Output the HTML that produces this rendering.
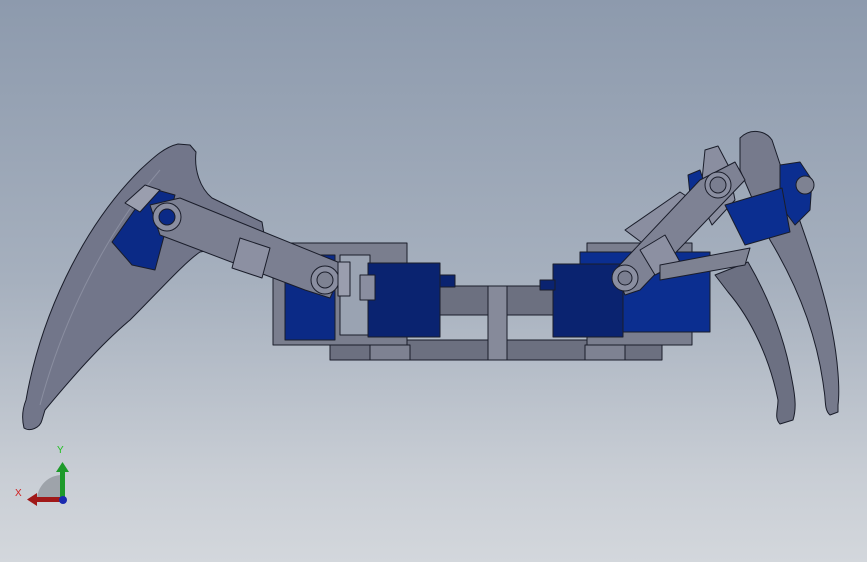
<!DOCTYPE html>
<html><head><style>
html,body{margin:0;padding:0}
body{width:867px;height:562px;overflow:hidden;background:linear-gradient(#8d9aad 0%,#a6b0be 50%,#c9ced5 85%,#d3d7dc 100%);}
svg{position:absolute;left:0;top:0}
text{font-family:"Liberation Sans",sans-serif}
</style></head><body>
<svg width="867" height="562" viewBox="0 0 867 562">
<g stroke="#1a1d2a" stroke-width="1" stroke-linejoin="round">
<!-- left claw -->
<path d="M24,428 C22,420 22,410 26,400 C40,320 80,230 140,170 C155,156 165,147 178,144 L190,145 L196,152 C194,170 200,188 212,198 L262,222 L265,240 L200,252 C185,262 160,290 130,320 C100,345 70,380 45,410 L42,420 C40,428 30,432 24,428 Z" fill="#72768a"/>
<path d="M40,405 C60,330 100,240 160,170" fill="none" stroke="#8a8ea0"/>
<!-- left servo on claw -->
<path d="M112,242 L150,188 L175,195 L155,270 L132,265 Z" fill="#0b2a86"/>
<path d="M125,203 L145,185 L160,190 L140,212 Z" fill="#9a9eae"/>
<!-- center bottom plates -->
<rect x="330" y="340" width="332" height="20" fill="#6c7080"/>
<rect x="370" y="345" width="40" height="15" fill="#7e8292"/>
<rect x="585" y="345" width="40" height="15" fill="#7e8292"/>
<rect x="343" y="286" width="300" height="29" fill="#6c7080"/>
<rect x="488" y="286" width="19" height="74" fill="#868a9a"/>
<!-- left bracket frame -->
<rect x="273" y="243" width="134" height="102" fill="#7a7e8e"/>
<rect x="285" y="255" width="50" height="85" fill="#0b2a86"/>
<rect x="340" y="255" width="30" height="80" fill="#9aa3b2"/>
<rect x="368" y="263" width="72" height="74" fill="#0a2370"/>
<rect x="360" y="275" width="15" height="25" fill="#8a8ea0"/>
<!-- right bracket frame -->
<rect x="587" y="243" width="105" height="102" fill="#7a7e8e"/>
<rect x="580" y="252" width="130" height="80" fill="#0b2e90"/>
<rect x="553" y="264" width="70" height="73" fill="#0a2370"/>
<rect x="440" y="275" width="15" height="12" fill="#0a2370"/>
<rect x="540" y="280" width="15" height="10" fill="#0a2370"/>
<!-- left arm -->
<path d="M150,205 L180,198 L345,265 L330,298 L305,290 L160,235 Z" fill="#7b7f91"/>
<path d="M240,238 L270,248 L262,278 L232,268 Z" fill="#8c90a2"/>
<circle cx="167" cy="217" r="14" fill="#8a8ea0"/><circle cx="167" cy="217" r="8" fill="#0b2a86"/>
<circle cx="325" cy="280" r="14" fill="#8a8ea0"/><circle cx="325" cy="280" r="8" fill="#7e8292"/>
<rect x="338" y="262" width="12" height="34" fill="#9a9eae"/>
<!-- right outer claw -->
<path d="M740,138 C750,128 765,130 772,140 L778,158 C795,210 820,270 832,330 C838,360 840,390 838,405 L838,412 L830,415 C824,410 826,400 824,390 C818,340 800,290 770,240 L740,170 Z" fill="#767a8c"/>
<!-- right inner claw -->
<path d="M715,275 L748,262 C770,300 785,340 792,380 C796,400 796,410 793,420 L780,424 C774,418 778,410 778,400 C770,360 752,320 728,292 Z" fill="#6c7082"/>
<path d="M705,150 L718,146 L728,165 L735,200 L712,225 L700,200 Z" fill="#8a8ea0"/>
<!-- right back servo -->
<path d="M780,165 L800,162 L812,180 L810,210 L795,225 L780,205 Z" fill="#0b2e90"/>
<circle cx="805" cy="185" r="9" fill="#7e8292"/>
<path d="M725,205 L782,188 L790,232 L745,245 Z" fill="#0b2e90"/>
<path d="M625,230 L680,192 L700,205 L675,225 L645,245 Z" fill="#8a8ea0"/>
<path d="M688,175 L700,170 L705,185 L690,195 Z" fill="#0b2e90"/>
<!-- right arm -->
<path d="M700,180 L735,162 L745,180 L640,290 L625,295 L615,270 Z" fill="#7e8294"/>
<path d="M640,250 L665,235 L680,262 L655,275 Z" fill="#8c90a2"/>
<path d="M660,265 L750,248 L745,265 L660,280 Z" fill="#7e8292"/>
<circle cx="718" cy="185" r="13" fill="#8a8ea0"/><circle cx="718" cy="185" r="8" fill="#7a7e90"/>
<circle cx="625" cy="278" r="13" fill="#8a8ea0"/><circle cx="625" cy="278" r="7" fill="#7a7e90"/>
</g>
<!-- triad -->
<path d="M62,500 L37,500 A25,25 0 0 1 62,475 Z" fill="#9ea3aa"/>
<rect x="60" y="470" width="5" height="30" fill="#1d9a2a"/>
<path d="M56,472 L62.5,462 L69,472 Z" fill="#1d9a2a"/>
<rect x="35" y="497" width="27" height="5" fill="#a01818"/>
<path d="M37,493 L27,499.5 L37,506 Z" fill="#a01818"/>
<circle cx="63" cy="500" r="4" fill="#1a2ab0"/>
<text x="57" y="453" font-size="10" fill="#20c020">Y</text>
<text x="15" y="496" font-size="10" fill="#d02020">X</text>
</svg>
</body></html>
